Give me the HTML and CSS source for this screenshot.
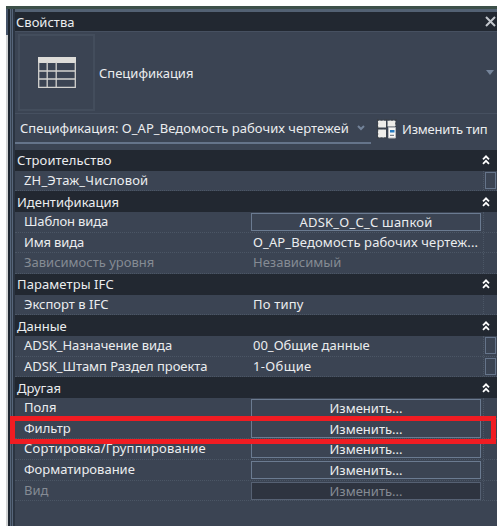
FILE: index.html
```html
<!DOCTYPE html>
<html lang="ru">
<head>
<meta charset="utf-8">
<title>Свойства</title>
<link rel="stylesheet" href="styles.css">
</head>
<body>
<svg class="defs" width="0" height="0"><symbol id="up" viewBox="0 0 8 10"><path d="M1 4.3 4 1.3 7 4.3M1 8.8 4 5.8 7 8.8" fill="none" stroke="#fff" stroke-width="1.8"/></symbol></svg>
<div class="window">
  <div class="edge"><div class="edge-top"></div><div class="edge-page"></div></div>
  <div class="rail"></div>
  <main class="panel">
    <header class="title"><span class="t-title">Свойства</span><svg width="11" height="11" viewBox="0 0 11 11"><path d="m1 1 9 9M10 1 1 10" stroke="#c3c7cd" stroke-width="2"/></svg></header>
    <section class="type">
      <div class="thumb"><svg width="38" height="31" viewBox="0 0 38 31"><path d="M0 0h38v6H0z" fill="#deddd9"/><path d="M.7 5v25.3h36.6V5M1 14h36M1 22h36M9.2 5v25M18.2 5v25" fill="none" stroke="#d3d2cf" stroke-width="1.3"/></svg></div>
      <span class="t-type">Спецификация</span>
      <i class="arrow"></i>
    </section>
    <section class="selector">
      <div class="combo"><span class="t-combo">Спецификация: О_АР_Ведомость рабочих чертежей</span><svg width="8" height="6" viewBox="0 0 8 6"><path d="m1 1 3 3 3-3" fill="none" stroke="#73839a" stroke-width="2"/></svg></div>
      <svg class="edit-icon" width="20" height="20" viewBox="0 0 20 20"><path d="M1 1.5h8v7H1zM10.5 1.5h8v6h-8zM1 10.5h8v8H1z" fill="#eeede9"/><path d="M0 1h20M.7 0v20M0 9.6h10M9.7 0v20M0 19h10M18.8 0v8" fill="none" stroke="#3b3f45" stroke-width="1" stroke-dasharray="2 1.5"/><path d="M11.5 8.5h7v10.5h-7z" fill="#f7f7f5" stroke="#b7b9bc"/><path d="M13 11h4.5v2.5H13z" fill="#277cc2"/><path d="M13 16.3h4" stroke="#596471"/></svg>
      <span class="t-edit">Изменить тип</span>
    </section>
    <section class="grid">
      <div class="group"><span class="g1">Строительство</span><svg><use href="#up"/></svg></div>
      <div class="row"><span class="name"><span class="n1">ZH_Этаж_Числовой</span></span><span class="value"></span><span class="last"><i class="box"></i></span></div>
      <div class="group"><span>Идентификация</span><svg><use href="#up"/></svg></div>
      <div class="row"><span class="name"><span class="n2">Шаблон вида</span></span><span class="value button"><span class="v2">ADSK_О_С_С шапкой</span></span><span class="last"></span></div>
      <div class="row"><span class="name"><span class="n2">Имя вида</span></span><span class="value"><span class="v3">О_АР_Ведомость рабочих чертеж...</span></span><span class="last"></span></div>
      <div class="row off"><span class="name"><span>Зависимость уровня</span></span><span class="value"><span>Независимый</span></span><span class="last"></span></div>
      <div class="group"><span class="g3">Параметры IFC</span><svg><use href="#up"/></svg></div>
      <div class="row"><span class="name"><span>Экспорт в IFC</span></span><span class="value"><span class="v5">По типу</span></span><span class="last"></span></div>
      <div class="group"><span>Данные</span><svg><use href="#up"/></svg></div>
      <div class="row"><span class="name"><span class="n6">ADSK_Назначение вида</span></span><span class="value"><span>00_Общие данные</span></span><span class="last"><i class="box"></i></span></div>
      <div class="row"><span class="name"><span class="n6">ADSK_Штамп Раздел проекта</span></span><span class="value"><span class="v7">1-Общие</span></span><span class="last"><i class="box"></i></span></div>
      <div class="group"><span>Другая</span><svg><use href="#up"/></svg></div>
      <div class="row"><span class="name"><span>Поля</span></span><span class="value button"><span>Изменить...</span></span><span class="last"></span></div>
      <div class="row"><span class="name"><span>Фильтр</span></span><span class="value button"><span>Изменить...</span></span><span class="last"></span></div>
      <div class="row"><span class="name"><span class="n10">Сортировка/Группирование</span></span><span class="value button"><span>Изменить...</span></span><span class="last"></span></div>
      <div class="row"><span class="name"><span>Форматирование</span></span><span class="value button"><span>Изменить...</span></span><span class="last"></span></div>
      <div class="row off"><span class="name"><span>Вид</span></span><span class="value button"><span>Изменить...</span></span><span class="last"></span></div>
    </section>
  </main>
  <div class="highlight"></div>
</div>
</body>
</html>
```

FILE: styles.css
```css
* { box-sizing: border-box; }
body { margin: 0; width: 502px; height: 532px; padding: 6px 0 0 6px; overflow: hidden; background: #fff; font: 13px/18px "Noto Sans", "Open Sans", sans-serif; color: #ebedef; }
.defs { position: absolute; }
svg { flex: none; display: block; }
span { white-space: nowrap; }
.window { position: relative; width: 491px; height: 520px; display: flex; border-top: 3px solid #3c5049; background: #3b4453; }
.edge { width: 2px; }
.edge-top { height: 26px; background: #46546a; }
.edge-page { height: 491px; background: #d2d4d5; }
.rail { width: 7px; background: linear-gradient(90deg, #202832 0 2px, #56657a 2px 3px, #35404e 3px 4px, #56657a 4px 5px, #2b3441 5px 7px); }
.panel { width: 482px; border-top: 3px solid #536173; background: #3b4453; }
.title { height: 19px; display: flex; align-items: center; justify-content: space-between; background: #222831; padding: 0 1px; }
.type { height: 83px; display: flex; align-items: center; border: solid #465060; border-width: 1px 0; padding-left: 3px; }
.thumb { width: 77px; height: 77px; display: grid; place-items: center; border: 2px solid #434d5c; margin-right: 4px; }
.arrow { margin-left: auto; margin-right: 3px; border: 4px solid transparent; border-top: 5px solid #75849a; border-bottom: 0; }
.selector { height: 36px; display: flex; align-items: flex-start; }
.combo { width: 356px; height: 30px; display: flex; align-items: center; justify-content: space-between; padding: 0 6px 0 5px; border-bottom: 2px solid #65748a; }
.t-combo { letter-spacing: .04px; }
.edit-icon { margin: 5px 5px 0 6px; }
.t-edit { margin-top: 6px; letter-spacing: -.2px; }
.grid { display: grid; grid-auto-rows: 20.68px; }
.group { display: flex; align-items: center; justify-content: space-between; background: #222831; padding: 0 7px 0 2px; }
.group svg { width: 8px; height: 10px; }
.row { display: grid; grid-template-columns: 236px 230px 16px; border-bottom: 1px dotted #4b5665; }
.name { padding-left: 9px; }
.value { padding-left: 2px; }
.button { height: 18px; margin-top: 1px; padding: 0; border: 1px solid #6b7b91; display: flex; justify-content: center; line-height: 17px; }
.last { margin-left: 2px; border-left: 1px dotted #4b5665; padding: 1px 0 0 1px; }
.box { display: block; width: 11px; height: 17px; border: 1px solid #65748a; }
.off { color: #858b94; }
.off .button { background: #2e3440; border-color: #566173; }
.g1, .g3 { letter-spacing: .1px; }
.n1 { letter-spacing: .17px; }
.n2 { letter-spacing: -.15px; }
.n6 { letter-spacing: -.05px; }
.n10 { letter-spacing: .19px; }
.v2 { letter-spacing: .22px; }
.v3 { letter-spacing: .12px; }
.v5 { letter-spacing: .2px; }
.v7 { letter-spacing: .35px; }
.highlight { position: absolute; left: 4px; top: 407px; width: 486px; height: 28px; border: 5px solid #f01c22; }
```
